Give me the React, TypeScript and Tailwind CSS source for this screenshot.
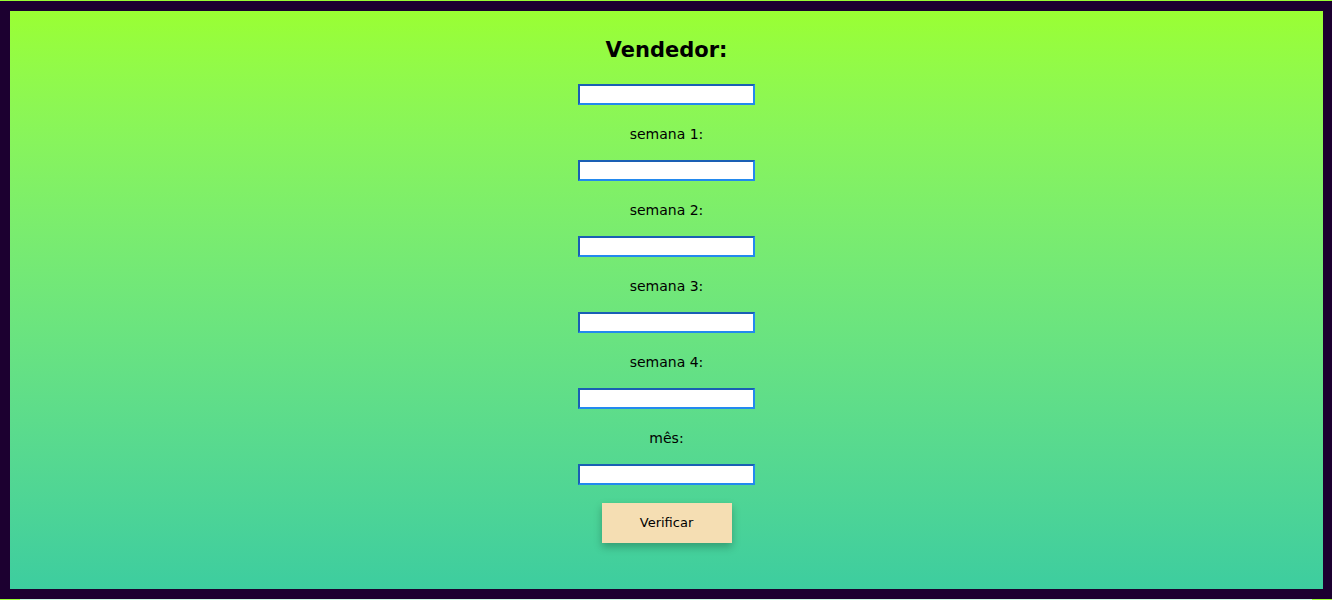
import React from "react";

const labels = ["semana 1:", "semana 2:", "semana 3:", "semana 4:", "mês:"];

function Field() {
  return (
    <input
      type="text"
      className="block w-[177px] h-[21px] bg-white border-2 border-solid border-t-[#1a5fb4] border-l-[#1a5fb4] border-b-[#2389ee] border-r-[#2389ee] outline-none"
    />
  );
}

export default function App() {
  return (
    <div className="w-[1332px] h-[600px] overflow-hidden bg-[#99ff33] pt-[1px] [font-family:'Comic_Sans_MS','DejaVu_Sans',sans-serif]">
      <div className="h-[598px] border-[10px] border-r-[9px] border-[#1c0030] bg-gradient-to-b from-[#9aff32] to-[#3dcd9f] flex flex-col items-center">
        <h1 className="pt-[23px] mb-[18px] text-[21px] leading-[32px] font-bold text-black">Vendedor:</h1>
        <Field />
        {labels.map((l) => (
          <React.Fragment key={l}>
            <div className="pt-[19px] pb-[16px] text-[14px] leading-[20px] text-black">{l}</div>
            <Field />
          </React.Fragment>
        ))}
        <button className="mt-[18px] w-[130px] h-[40px] bg-[#f5deb3] text-[13px] text-black shadow-[0_4px_8px_rgba(0,0,0,0.25)]">
          Verificar
        </button>
      </div>
      <div className="mx-[20px] h-[1px] bg-[#c8f5e0]" />
    </div>
  );
}
